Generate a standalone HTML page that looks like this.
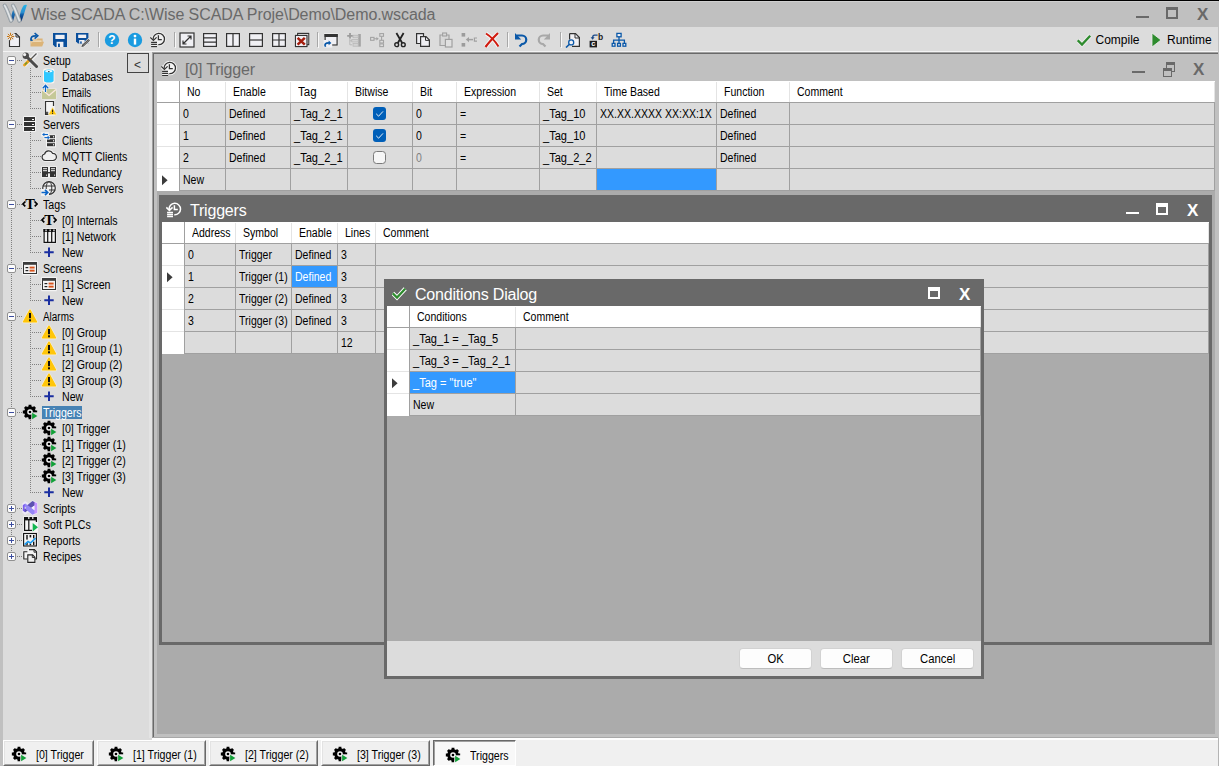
<!DOCTYPE html><html><head><meta charset="utf-8"><title>Wise SCADA</title><style>
html,body{margin:0;padding:0;}
body{width:1219px;height:766px;position:relative;overflow:hidden;background:#c0c0c0;font-family:"Liberation Sans",sans-serif;}
div,span,svg{position:absolute;box-sizing:border-box;}
span{white-space:nowrap;}
.t{font-size:12px;line-height:16px;color:#000;transform:scaleX(0.886);transform-origin:0 50%;margin-top:1.4px;}
.g{font-size:12px;line-height:21px;color:#000;transform:scaleX(0.877);transform-origin:0 50%;margin-top:1px;}
.w{color:#fff;}
.ttl{font-size:16px;line-height:27px;letter-spacing:-0.2px;margin-top:2px;}
.tb{font-size:12px;line-height:16px;color:#000;}
.x{font-size:17px;font-weight:bold;line-height:20px;margin-top:1px;}
</style></head><body>
<div style="left:0px;top:0px;width:1219px;height:1px;background:#000;"></div>
<div style="left:0px;top:1px;width:1219px;height:26px;background:#c0c0c0;"></div>
<svg style="left:0px;top:0px;" width="30" height="24" viewBox="0 0 30 24" ><linearGradient id="lgB" x1="0" y1="0" x2="0" y2="1"><stop offset="0" stop-color="#24b6ea"/><stop offset="0.45" stop-color="#2a8fd0"/><stop offset="0.6" stop-color="#0e58a4"/><stop offset="1" stop-color="#07245f"/></linearGradient><linearGradient id="lgB2" x1="0" y1="0" x2="0" y2="1"><stop offset="0" stop-color="#2a8fd0"/><stop offset="1" stop-color="#0b3d86"/></linearGradient><path d="M10.7 21.4 C10.8 17 12.2 12 13.4 8.9 L15.2 14 C14.4 16.5 13.6 19 13 21.2 Z" fill="url(#lgB2)"/><path d="M4.7 5.6 C6.8 8.5 8.6 14.5 11.1 20.6" fill="none" stroke="#8d969d" stroke-width="4.1" stroke-linecap="round"/><path d="M4.7 5.6 C6.8 8.5 8.6 14.5 11.1 20.6" fill="none" stroke="#b4bbc0" stroke-width="2.9" stroke-linecap="round"/><path d="M4.7 5.6 C6.8 8.5 8.6 14.5 11.1 20.6" fill="none" stroke="#e4e7e9" stroke-width="1.4" stroke-linecap="round"/><path d="M19.2 21.4 C19.3 16 21 9 23.6 5.6 C24.6 4.6 26 4.5 26.9 5 C25.2 10 23.2 17 21.6 21 C20.8 21.9 19.9 21.9 19.2 21.4 Z" fill="url(#lgB)"/><path d="M13.0 5.6 C15.100000000000001 8.5 16.9 14.5 19.4 20.6" fill="none" stroke="#8d969d" stroke-width="4.1" stroke-linecap="round"/><path d="M13.0 5.6 C15.100000000000001 8.5 16.9 14.5 19.4 20.6" fill="none" stroke="#b4bbc0" stroke-width="2.9" stroke-linecap="round"/><path d="M13.0 5.6 C15.100000000000001 8.5 16.9 14.5 19.4 20.6" fill="none" stroke="#e4e7e9" stroke-width="1.4" stroke-linecap="round"/></svg>
<div style="left:0px;top:1px;width:1219px;height:1px;background:#d0d0d0;"></div>
<span class="ttl" style="left:31px;top:1px;color:#696969;line-height:27px;margin-top:0;letter-spacing:-0.08px;">Wise SCADA C:\Wise SCADA Proje\Demo\Demo.wscada</span>
<div style="left:1136px;top:16px;width:13px;height:2px;background:#696969;"></div>
<div style="left:1166px;top:7px;width:12px;height:12px;border:2px solid #696969;border-top:3px solid #696969;"></div>
<span class="x" style="left:1197px;top:4px;color:#696969;">X</span>
<div style="left:3px;top:27px;width:1215px;height:24px;background:#dcdcdc;"></div>
<div style="left:3px;top:51px;width:1215px;height:1px;background:#f4f4f4;"></div>
<svg style="left:7px;top:32px;" width="16" height="16" viewBox="0 0 16 16" ><path d="M2.5 8 V14.5 H12.5 V5 L9 1.5 H7.5" fill="#f0f0f4" stroke="#333" stroke-width="1.1"/><path d="M9 1.5 V5 H12.5" fill="none" stroke="#333" stroke-width="1"/><circle cx="3.5" cy="4.5" r="3.9" fill="#dcdcdc"/><g stroke="#c87818" stroke-width="1"><path d="M3.5 0.8 V8.2 M-0.2 4.5 H7.2 M0.9 1.9 L6.1 7.1 M6.1 1.9 L0.9 7.1"/></g><circle cx="3.5" cy="4.5" r="1.1" fill="#f4f0e8"/></svg>
<svg style="left:29px;top:32px;" width="16" height="16" viewBox="0 0 16 16" ><path d="M1.5 7.5 V14.5 H13.2 L15 9.8 H13.6 V6.5 H8.5 L7.5 7.5 Z" fill="#dcb478"/><path d="M2.6 8.6 H12.6 V9.8 H3.4 L2.6 12 Z" fill="#f2e2c6"/><path d="M2.2 8.6 C1.2 5 3 3.6 7.5 3.8" fill="none" stroke="#0a58a8" stroke-width="1.7"/><path d="M5.6 1 L8.8 3.8 L5.6 6.6" fill="none" stroke="#0a58a8" stroke-width="1.6"/><path d="M1.4 7.6 L3.6 8.6" stroke="#0a58a8" stroke-width="1.4"/></svg>
<svg style="left:52px;top:32px;" width="16" height="16" viewBox="0 0 16 16" ><path d="M1 1 H15 V15 H3.2 L1 12.8 Z" fill="#0a4f9c"/><rect x="3.4" y="2.8" width="9.2" height="4.2" fill="#f0f0f4"/><rect x="4.6" y="9.8" width="6.8" height="5.2" fill="#f0f0f4"/><rect x="6" y="11.6" width="1.9" height="3.4" fill="#0a4f9c"/></svg>
<svg style="left:75px;top:32px;" width="16" height="16" viewBox="0 0 16 16" ><path d="M1 1 H13.4 V11.6 H3 L1 9.6 Z" fill="#0a4f9c"/><rect x="3.2" y="2.6" width="8" height="3.4" fill="#f0f0f4"/><rect x="4.2" y="8" width="5.4" height="3.6" fill="#f0f0f4"/><rect x="5.2" y="9.4" width="1.5" height="2.2" fill="#0a4f9c"/><path d="M5.8 15.6 L6.6 12.4 L13.4 6 L16 8.6 L9 15 Z" fill="#ececec"/><path d="M6.4 15 L7.2 12.8 L13.4 7 L15 8.6 L8.6 14.4 Z" fill="#484848"/><path d="M8.2 13.4 L13.8 8.2" stroke="#b8b8b8" stroke-width="0.6"/></svg>
<div style="left:98px;top:32px;width:1px;height:15px;background:#a8a8a8;"></div>
<div style="left:99px;top:33px;width:1px;height:15px;background:#f8f8f8;"></div>
<svg style="left:104px;top:32px;" width="16" height="16" viewBox="0 0 16 16" ><circle cx="8" cy="8" r="7.2" fill="#1a9be0"/><text x="8" y="12.3" font-family="Liberation Sans,sans-serif" font-weight="bold" font-size="12" text-anchor="middle" fill="#fff">?</text></svg>
<svg style="left:127px;top:32px;" width="16" height="16" viewBox="0 0 16 16" ><circle cx="8" cy="8" r="7.2" fill="#1a9be0"/><rect x="6.8" y="6.6" width="2.4" height="6" fill="#fff"/><circle cx="8" cy="4.1" r="1.4" fill="#fff"/></svg>
<svg style="left:150px;top:32px;" width="16" height="16" viewBox="0 0 16 16" ><g fill="none" stroke="#f0f0f0" stroke-width="3"><path d="M3.15 7.7 A5.7 5.7 0 1 1 8.3 12.7"/><path d="M8.4 3.2 V7.5 H11.8"/><path d="M0.3 5.4 L3.4 8.4 L6.6 5.4"/><path d="M1.1 10.4 H7 M1.1 12.4 H7 M1.1 14.5 H7"/></g><circle cx="8.8" cy="6.8" r="5.5" fill="#f0f0f0"/><g fill="none" stroke="#333" stroke-width="1.25"><path d="M3.15 7.7 A5.7 5.7 0 1 1 8.3 12.7"/><path d="M8.4 3.2 V7.5 H11.8"/><path d="M0.3 5.4 L3.4 8.4 L6.6 5.4"/><path d="M1.1 10.4 H7 M1.1 12.4 H7 M1.1 14.5 H7"/></g></svg>
<div style="left:174px;top:32px;width:1px;height:15px;background:#a8a8a8;"></div>
<div style="left:175px;top:33px;width:1px;height:15px;background:#f8f8f8;"></div>
<svg style="left:179px;top:32px;" width="16" height="16" viewBox="0 0 16 16" ><rect x="1" y="1" width="14" height="14" fill="#f0f0f4" stroke="#333" stroke-width="1.2"/><path d="M4 12 L12 4 M4 8.5 V12 H7.5 M8.5 4 H12 V7.5" fill="none" stroke="#333" stroke-width="1.2"/></svg>
<svg style="left:202px;top:32px;" width="16" height="16" viewBox="0 0 16 16" ><rect x="1.6" y="1.6" width="12.8" height="12.8" fill="#f0f0f4" stroke="#333" stroke-width="1.2"/><path d="M1 5.8 H15 M1 10.2 H15" stroke="#333" stroke-width="1.2"/></svg>
<svg style="left:225px;top:32px;" width="16" height="16" viewBox="0 0 16 16" ><rect x="1.6" y="1.6" width="12.8" height="12.8" fill="#f0f0f4" stroke="#333" stroke-width="1.2"/><path d="M8 1 V15" stroke="#333" stroke-width="1.2"/></svg>
<svg style="left:248px;top:32px;" width="16" height="16" viewBox="0 0 16 16" ><rect x="1.6" y="1.6" width="12.8" height="12.8" fill="#f0f0f4" stroke="#333" stroke-width="1.2"/><path d="M1 8 H15" stroke="#333" stroke-width="1.2"/></svg>
<svg style="left:271px;top:32px;" width="16" height="16" viewBox="0 0 16 16" ><rect x="1.6" y="1.6" width="12.8" height="12.8" fill="#f0f0f4" stroke="#333" stroke-width="1.2"/><path d="M1 8 H15 M8 1 V15" stroke="#333" stroke-width="1.2"/></svg>
<svg style="left:294px;top:32px;" width="16" height="16" viewBox="0 0 16 16" ><path d="M2.6 0.2 H15.8 V13.6 H14 V15.6 H0.2 V2.4 H2.6 Z" fill="#f4f4f4"/><path d="M3.6 3 V1.4 H14.8 V12.6 H13.2" fill="none" stroke="#333" stroke-width="1.1"/><rect x="1.4" y="3.4" width="11.6" height="11.2" fill="#f0f0f4" stroke="#333" stroke-width="1.2"/><path d="M3.6 5.8 L10.8 12.6 M10.8 5.8 L3.6 12.6" stroke="#a41c0c" stroke-width="2.5"/></svg>
<div style="left:317px;top:32px;width:1px;height:15px;background:#a8a8a8;"></div>
<div style="left:318px;top:33px;width:1px;height:15px;background:#f8f8f8;"></div>
<svg style="left:323px;top:32px;" width="16" height="16" viewBox="0 0 16 16" ><rect x="1" y="1.4" width="14.2" height="12.6" fill="#f4f4f4"/><rect x="2.1" y="2.6" width="12" height="10.4" fill="#f0f0f4" stroke="#333" stroke-width="1.2"/><rect x="1.5" y="2" width="13.2" height="3" fill="#333"/><path d="M0.6 8 h8.6 v7.6 h-8.6 z" fill="#f0f0f4"/><path d="M2.6 14.8 C1 12.4 2.4 10.6 6.6 10.8" fill="none" stroke="#0a58a8" stroke-width="1.7"/><path d="M5.6 8.6 L8.4 10.9 L5.6 13.2 Z" fill="#0a58a8"/></svg>
<svg style="left:346px;top:32px;" width="16" height="16" viewBox="0 0 16 16" ><path d="M4 1 V6.6 M1.2 3.8 H6.8" stroke="#9c9c9c" stroke-width="1.8"/><path d="M3.8 6.4 V12.8 H6 M3.8 8.8 H6" fill="none" stroke="#b8b8b8" stroke-width="1"/><rect x="12.2" y="2" width="2.6" height="12.6" fill="#a4a4a4"/><g fill="#d2d2d2" stroke="#b4b4b4" stroke-width="0.7"><rect x="7" y="3.2" width="5.2" height="2.6"/><rect x="5.8" y="7.4" width="6.4" height="2.6"/><rect x="7" y="11.6" width="5.2" height="2.6"/></g></svg>
<svg style="left:369px;top:32px;" width="16" height="16" viewBox="0 0 16 16" ><g stroke="#a4a4a4" fill="#dedede" stroke-width="1.1"><rect x="1.6" y="5.4" width="3.4" height="2.9"/><rect x="10.8" y="1.6" width="3.7" height="2.7"/><rect x="10.8" y="8.3" width="3.7" height="2.7"/><rect x="10.8" y="11.9" width="3.7" height="2.7"/><path d="M5 6.8 H8.2 M12.6 4.3 V8.3" fill="none"/></g><path d="M7.4 5 L9.8 6.8 L7.4 8.6 Z" fill="#a4a4a4"/></svg>
<svg style="left:392px;top:32px;" width="16" height="16" viewBox="0 0 16 16" ><g fill="none" stroke="#222"><path d="M4.4 1 L10.2 11 M11.6 1 L5.8 11" stroke-width="1.8"/><circle cx="4.7" cy="12.7" r="1.9" stroke-width="1.4"/><circle cx="11.3" cy="12.7" r="1.9" stroke-width="1.4"/></g></svg>
<svg style="left:415px;top:32px;" width="16" height="16" viewBox="0 0 16 16" ><path d="M1.6 1.6 H8.5 V11.5 H1.6 Z" fill="#f0f0f4" stroke="#333" stroke-width="1.2"/><path d="M5.6 4.6 H11 L14.4 8 V14.4 H5.6 Z" fill="#f0f0f4" stroke="#333" stroke-width="1.2"/><path d="M10.5 4.6 V8.4 H14.4" fill="none" stroke="#333" stroke-width="1"/></svg>
<svg style="left:438px;top:32px;" width="16" height="16" viewBox="0 0 16 16" ><path d="M2 3 H11 V13.5 H2 Z" fill="#d8d8d8" stroke="#a0a0a0" stroke-width="1.2"/><rect x="4.6" y="1" width="4" height="3" fill="#d8d8d8" stroke="#a0a0a0" stroke-width="1.1"/><rect x="7.4" y="7.4" width="6.6" height="7.6" fill="#e0e0e0" stroke="#a0a0a0" stroke-width="1.2"/></svg>
<svg style="left:461px;top:32px;" width="16" height="16" viewBox="0 0 16 16" ><rect x="0.6" y="1" width="3.6" height="3.6" fill="#9c9c9c"/><rect x="0.6" y="11" width="3.6" height="3.6" fill="#9c9c9c"/><path d="M7 7.6 H12" stroke="#a0a0a0" stroke-width="1.5"/><path d="M8 5 L4.8 7.6 L8 10.2 Z" fill="#a0a0a0"/><path d="M16 6 H13.4 V9.2 H16" fill="none" stroke="#a0a0a0" stroke-width="1.2"/></svg>
<svg style="left:484px;top:32px;" width="16" height="16" viewBox="0 0 16 16" ><path d="M2 1.5 C6 4 11 9 14.5 14.5 M14 1 C10 5 5 10 1.5 15" fill="none" stroke="#fff" stroke-width="4" opacity="0.7"/><path d="M2 1.5 C6 4 11 9 14.5 14.5" fill="none" stroke="#d01c10" stroke-width="2"/><path d="M14 1 C10 5 5 10 1.5 15" fill="none" stroke="#d01c10" stroke-width="2.2"/></svg>
<div style="left:507px;top:32px;width:1px;height:15px;background:#a8a8a8;"></div>
<div style="left:508px;top:33px;width:1px;height:15px;background:#f8f8f8;"></div>
<svg style="left:513px;top:32px;" width="16" height="16" viewBox="0 0 16 16" ><path d="M3.5 3.5 H9 A4.2 4.2 0 0 1 9 12 L6.5 14.5" fill="none" stroke="#0a58a8" stroke-width="2.2"/><path d="M2 1 V7.5 H8.2 Z" fill="#0a58a8"/></svg>
<svg style="left:536px;top:32px;" width="16" height="16" viewBox="0 0 16 16" ><path d="M12.5 3.5 H7 A4.2 4.2 0 0 0 7 12 L9.5 14.5" fill="none" stroke="#a8a8a8" stroke-width="2.2"/><path d="M14 1 V7.5 H7.8 Z" fill="#a8a8a8"/></svg>
<div style="left:560px;top:32px;width:1px;height:15px;background:#a8a8a8;"></div>
<div style="left:561px;top:33px;width:1px;height:15px;background:#f8f8f8;"></div>
<svg style="left:565px;top:32px;" width="16" height="16" viewBox="0 0 16 16" ><path d="M4.6 1.6 H10.5 L14.4 5.5 V14.4 H7" fill="#f0f0f4" stroke="#333" stroke-width="1.2"/><path d="M10 1.6 V6 H14.4" fill="none" stroke="#333" stroke-width="1"/><path d="M4.6 1.6 V7.4" stroke="#333" stroke-width="1.2"/><circle cx="6.2" cy="10.4" r="2.5" fill="#f0f0f4" stroke="#0a58a8" stroke-width="1.3"/><path d="M4.4 12.2 L1 15.6" stroke="#0a58a8" stroke-width="1.5"/></svg>
<svg style="left:588px;top:32px;" width="16" height="16" viewBox="0 0 16 16" ><rect x="1.6" y="8.8" width="7.4" height="6.6" fill="#1c1c1c"/><text x="5.3" y="14.4" font-family="Liberation Sans,sans-serif" font-weight="bold" font-size="7.5" text-anchor="middle" fill="#fff">c</text><text x="12.6" y="7.6" font-family="Liberation Sans,sans-serif" font-weight="bold" font-size="8.5" text-anchor="middle" fill="#1c1c1c">b</text><path d="M9.6 3.2 H6.6 C5 3.2 4.6 4 4.6 6" fill="none" stroke="#1a4a8a" stroke-width="1.3"/><path d="M2.6 5.2 L4.6 7.8 L6.6 5.2 Z" fill="#1a4a8a"/></svg>
<svg style="left:611px;top:32px;" width="16" height="16" viewBox="0 0 16 16" ><g fill="#f0f0f4" stroke="#0a58a8" stroke-width="1.3"><rect x="5.9" y="1.4" width="4.2" height="3.4"/><rect x="1.2" y="11.4" width="2.8" height="2.8"/><rect x="6.6" y="11.4" width="2.8" height="2.8"/><rect x="12" y="11.4" width="2.8" height="2.8"/><path d="M8 4.8 V11.4 M2.6 11.4 V8.2 H13.4 V11.4" fill="none"/></g></svg>
<span class="tb" style="left:1095.5px;top:32px;">Compile</span>
<span class="tb" style="left:1167px;top:32px;">Runtime</span>
<svg style="left:1077px;top:33px;" width="16" height="16" viewBox="0 0 16 16" ><path d="M0.7 7.3 L5 11.6 L13.2 2.8" fill="none" stroke="#ececec" stroke-width="4.2" stroke-linejoin="miter"/><path d="M0.7 7.3 L5 11.6 L13.2 2.8" fill="none" stroke="#2e8b2e" stroke-width="2.3"/></svg>
<svg style="left:1151px;top:32px;" width="12" height="16" viewBox="0 0 12 16" ><path d="M1 1 L10 8 L1 15 Z" fill="#2e8b2e" stroke="#eee" stroke-width="0.8"/></svg>
<div style="left:0px;top:27px;width:3px;height:739px;background:#c0c0c0;"></div>
<div style="left:3px;top:52px;width:149px;height:688px;background:#dcdcdc;"></div>
<div style="left:149px;top:52px;width:3px;height:686px;background:#e4e4e4;"></div>
<div style="left:11px;top:66px;width:1px;height:486px;background:repeating-linear-gradient(to bottom,#808080 0,#808080 1px,transparent 1px,transparent 2px);"></div>
<div style="left:17px;top:60px;width:5px;height:1px;background:repeating-linear-gradient(to right,#808080 0,#808080 1px,transparent 1px,transparent 2px);"></div>
<svg style="left:7px;top:56px;" width="9" height="9" viewBox="0 0 9 9" ><rect x="0.5" y="0.5" width="8" height="8" rx="1.5" fill="#fcfcfc" stroke="#919191"/><rect x="2" y="4" width="5" height="1" fill="#3c4da0"/></svg>
<svg style="left:22px;top:52px;" width="16" height="16" viewBox="0 0 16 16" ><g stroke="#f0f0f0" stroke-width="4" stroke-linecap="round" fill="none"><path d="M4 4 L14 14"/><path d="M14 2 L3 13"/></g><path d="M14.5 1.5 L8 8" stroke="#555" stroke-width="1.3"/><path d="M8 7.5 L2.5 13" stroke="#e8a020" stroke-width="3" stroke-linecap="round"/><path d="M5 10.5 L3 12.5" stroke="#6a9a30" stroke-width="1.5"/><path d="M5 5 L14.5 14.5" stroke="#4a4a4a" stroke-width="3" stroke-linecap="round"/><circle cx="3.8" cy="3.8" r="3.2" fill="#4a4a4a"/><circle cx="2.6" cy="2.6" r="1.6" fill="#f0f0f0"/></svg>
<div style="left:30px;top:68px;width:1px;height:41px;background:repeating-linear-gradient(to bottom,#808080 0,#808080 1px,transparent 1px,transparent 2px);"></div>
<span class="t" style="left:43px;top:52px;">Setup</span>
<div style="left:32px;top:76px;width:9px;height:1px;background:repeating-linear-gradient(to right,#808080 0,#808080 1px,transparent 1px,transparent 2px);"></div>
<svg style="left:41px;top:68px;" width="16" height="16" viewBox="0 0 16 16" ><rect x="2" y="0.5" width="11.5" height="15" rx="2.5" fill="#fdf4ee"/><path d="M3 3.5 V12.5 A4.8 2 0 0 0 12.6 12.5 V3.5 Z" fill="#30c8ff"/><ellipse cx="7.8" cy="3.5" rx="4.8" ry="2" fill="#30c8ff"/><ellipse cx="7.8" cy="3.2" rx="3.6" ry="1.1" fill="#e8faff"/><rect x="7" y="3.2" width="1.6" height="0.9" fill="#333"/></svg>
<span class="t" style="left:62px;top:68px;">Databases</span>
<div style="left:32px;top:92px;width:9px;height:1px;background:repeating-linear-gradient(to right,#808080 0,#808080 1px,transparent 1px,transparent 2px);"></div>
<svg style="left:41px;top:84px;" width="16" height="16" viewBox="0 0 16 16" ><rect x="0.5" y="4.5" width="15" height="11" fill="#f0ece4"/><rect x="1" y="5" width="14" height="10" fill="#c5c898"/><path d="M1 5.5 L8 11.5 L15 5.5" fill="none" stroke="#fbe9e0" stroke-width="1.3"/><path d="M4.5 8 V1.5 M1.8 4.2 L4.5 1.3 L7.2 4.2" fill="none" stroke="#fff" stroke-width="2.6"/><path d="M4.5 8 V1.5 M1.8 4.2 L4.5 1.3 L7.2 4.2" fill="none" stroke="#0a64c8" stroke-width="1.3"/></svg>
<span class="t" style="left:62px;top:84px;transform:scaleX(0.81);">Emails</span>
<div style="left:32px;top:108px;width:9px;height:1px;background:repeating-linear-gradient(to right,#808080 0,#808080 1px,transparent 1px,transparent 2px);"></div>
<svg style="left:41px;top:100px;" width="16" height="16" viewBox="0 0 16 16" ><rect x="3.2" y="0.2" width="10.6" height="15.6" fill="#f0f0f0"/><path d="M12.5 6 V1.5 H4.5 V14.5 H8" fill="#f4f4f4" stroke="#333" stroke-width="1.2"/><rect x="5.2" y="12.2" width="1.6" height="1.6" fill="none" stroke="#333" stroke-width="0.8"/><path d="M11.5 7.2 L15.7 14.8 H7.3 Z" fill="#ffc60a" stroke="#f8f0d0" stroke-width="0.6"/><rect x="11" y="9.6" width="1.1" height="2.6" fill="#222"/><rect x="11" y="12.8" width="1.1" height="1.1" fill="#222"/></svg>
<span class="t" style="left:62px;top:100px;">Notifications</span>
<div style="left:17px;top:124px;width:5px;height:1px;background:repeating-linear-gradient(to right,#808080 0,#808080 1px,transparent 1px,transparent 2px);"></div>
<svg style="left:7px;top:120px;" width="9" height="9" viewBox="0 0 9 9" ><rect x="0.5" y="0.5" width="8" height="8" rx="1.5" fill="#fcfcfc" stroke="#919191"/><rect x="2" y="4" width="5" height="1" fill="#3c4da0"/></svg>
<svg style="left:22px;top:116px;" width="16" height="16" viewBox="0 0 16 16" ><rect x="1" y="0" width="13" height="16" rx="1.5" fill="#f4f4f4"/><rect x="2" y="1" width="11" height="4" fill="#333"/><rect x="10" y="3" width="2" height="1" fill="#fff"/><rect x="2" y="6" width="11" height="4" fill="#333"/><rect x="10" y="8" width="2" height="1" fill="#fff"/><rect x="2" y="11" width="11" height="4" fill="#333"/><rect x="10" y="13" width="2" height="1" fill="#fff"/></svg>
<div style="left:30px;top:132px;width:1px;height:57px;background:repeating-linear-gradient(to bottom,#808080 0,#808080 1px,transparent 1px,transparent 2px);"></div>
<span class="t" style="left:43px;top:116px;">Servers</span>
<div style="left:32px;top:140px;width:9px;height:1px;background:repeating-linear-gradient(to right,#808080 0,#808080 1px,transparent 1px,transparent 2px);"></div>
<svg style="left:41px;top:132px;" width="16" height="16" viewBox="0 0 16 16" ><rect x="5" y="2.5" width="10" height="13" rx="1" fill="#f4f4f4"/><rect x="6" y="3.2" width="8" height="3" fill="#333"/><rect x="12" y="4.2" width="1.2" height="1.2" fill="#fff"/><rect x="6" y="7.2" width="8" height="3" fill="#333"/><rect x="12" y="8.2" width="1.2" height="1.2" fill="#fff"/><rect x="6" y="11.2" width="8" height="3" fill="#333"/><rect x="12" y="12.2" width="1.2" height="1.2" fill="#fff"/><path d="M0.2 0.2 h7.6 v4.4 h-7.6 z M2.6 3.4 h6.4 v4 h-6.4 z" fill="#f4f4f4"/><path d="M7 2.5 H2.5" stroke="#0a64c8" stroke-width="1.1"/><path d="M3.4 0.7 L1 2.5 L3.4 4.3 Z" fill="#0a64c8"/><path d="M3.4 5.6 H7.5" stroke="#0a64c8" stroke-width="1.1"/><path d="M6.6 3.8 L9 5.6 L6.6 7.4 Z" fill="#0a64c8"/></svg>
<span class="t" style="left:62px;top:132px;transform:scaleX(0.829);">Clients</span>
<div style="left:32px;top:156px;width:9px;height:1px;background:repeating-linear-gradient(to right,#808080 0,#808080 1px,transparent 1px,transparent 2px);"></div>
<svg style="left:41px;top:148px;" width="16" height="16" viewBox="0 0 16 16" ><path d="M4.3 12.5 A3.3 3.3 0 0 1 3.6 6 A4.3 4.3 0 0 1 11.6 5.3 A3.6 3.6 0 0 1 12 12.5 Z" fill="#f0f0f0" stroke="#f0f0f0" stroke-width="3"/><path d="M4.3 12.5 A3.3 3.3 0 0 1 3.6 6 A4.3 4.3 0 0 1 11.6 5.3 A3.6 3.6 0 0 1 12 12.5 Z" fill="#f0f0f0" stroke="#333" stroke-width="1.2"/></svg>
<span class="t" style="left:62px;top:148px;">MQTT Clients</span>
<div style="left:32px;top:172px;width:9px;height:1px;background:repeating-linear-gradient(to right,#808080 0,#808080 1px,transparent 1px,transparent 2px);"></div>
<svg style="left:41px;top:164px;" width="16" height="16" viewBox="0 0 16 16" ><rect x="0.2" y="2.2" width="15.6" height="11.6" fill="#f0f0f0"/><rect x="1" y="3" width="6" height="10" fill="#333"/><rect x="2" y="4.2" width="4" height="1" fill="#f0f0f0"/><rect x="2" y="6.2" width="4" height="1" fill="#f0f0f0"/><rect x="5" y="10.6" width="1.1" height="1.1" fill="#f0f0f0"/><rect x="9" y="3" width="6" height="10" fill="#333"/><rect x="10" y="4.2" width="4" height="1" fill="#f0f0f0"/><rect x="10" y="6.2" width="4" height="1" fill="#f0f0f0"/><rect x="13" y="10.6" width="1.1" height="1.1" fill="#f0f0f0"/><rect x="7" y="8" width="2" height="1.4" fill="#333"/></svg>
<span class="t" style="left:62px;top:164px;">Redundancy</span>
<div style="left:32px;top:188px;width:9px;height:1px;background:repeating-linear-gradient(to right,#808080 0,#808080 1px,transparent 1px,transparent 2px);"></div>
<svg style="left:41px;top:180px;" width="16" height="16" viewBox="0 0 16 16" ><circle cx="8" cy="8" r="7.6" fill="#f0f0f0"/><circle cx="8" cy="8" r="6.3" fill="#f0f0f0" stroke="#333" stroke-width="1.2"/><ellipse cx="8" cy="8" rx="2.8" ry="6.3" fill="none" stroke="#333" stroke-width="1"/><path d="M1.7 6 H14.3 M1.7 10 H14.3" stroke="#333" stroke-width="1"/><path d="M0 9 h8 v7 h-8 z" fill="#f0f0f0"/><path d="M0.5 12.5 H6.5 M4 9.8 L6.8 12.5 L4 15.2" fill="none" stroke="#0a64c8" stroke-width="1.6"/></svg>
<span class="t" style="left:62px;top:180px;">Web Servers</span>
<div style="left:17px;top:204px;width:5px;height:1px;background:repeating-linear-gradient(to right,#808080 0,#808080 1px,transparent 1px,transparent 2px);"></div>
<svg style="left:7px;top:200px;" width="9" height="9" viewBox="0 0 9 9" ><rect x="0.5" y="0.5" width="8" height="8" rx="1.5" fill="#fcfcfc" stroke="#919191"/><rect x="2" y="4" width="5" height="1" fill="#3c4da0"/></svg>
<svg style="left:22px;top:196px;" width="16" height="16" viewBox="0 0 16 16" ><text x="8" y="12.8" font-family="Liberation Serif,serif" font-weight="bold" font-size="14.5" text-anchor="middle" fill="#000">T</text><path d="M3.3 5.6 L0.9 8 L3.3 10.4 M12.7 5.6 L15.1 8 L12.7 10.4" fill="none" stroke="#000" stroke-width="1.6"/></svg>
<div style="left:30px;top:212px;width:1px;height:41px;background:repeating-linear-gradient(to bottom,#808080 0,#808080 1px,transparent 1px,transparent 2px);"></div>
<span class="t" style="left:43px;top:196px;">Tags</span>
<div style="left:32px;top:220px;width:9px;height:1px;background:repeating-linear-gradient(to right,#808080 0,#808080 1px,transparent 1px,transparent 2px);"></div>
<svg style="left:41px;top:212px;" width="16" height="16" viewBox="0 0 16 16" ><text x="8" y="12.8" font-family="Liberation Serif,serif" font-weight="bold" font-size="14.5" text-anchor="middle" fill="#000">T</text><path d="M3.3 5.6 L0.9 8 L3.3 10.4 M12.7 5.6 L15.1 8 L12.7 10.4" fill="none" stroke="#000" stroke-width="1.6"/></svg>
<span class="t" style="left:62px;top:212px;">[0] Internals</span>
<div style="left:32px;top:236px;width:9px;height:1px;background:repeating-linear-gradient(to right,#808080 0,#808080 1px,transparent 1px,transparent 2px);"></div>
<svg style="left:41px;top:228px;" width="16" height="16" viewBox="0 0 16 16" ><rect x="1.6" y="0.4" width="13.8" height="15" fill="#f0f0f0"/><rect x="3.1" y="1.6" width="11.3" height="12.8" fill="#f4f4f4" stroke="#111" stroke-width="1.2"/><rect x="2.5" y="1" width="12.5" height="3" fill="#111"/><path d="M6.7 2 V14 M10.7 2 V14" stroke="#111" stroke-width="1.2"/><rect x="4.4" y="1.5" width="1.3" height="1.8" fill="#f4f4f4"/><rect x="8.5" y="1.5" width="1.3" height="1.8" fill="#f4f4f4"/><rect x="12.3" y="1.5" width="1.3" height="1.8" fill="#f4f4f4"/></svg>
<span class="t" style="left:62px;top:228px;">[1] Network</span>
<div style="left:32px;top:252px;width:9px;height:1px;background:repeating-linear-gradient(to right,#808080 0,#808080 1px,transparent 1px,transparent 2px);"></div>
<svg style="left:41px;top:244px;" width="16" height="16" viewBox="0 0 16 16" ><path d="M8 3.6 V13 M3.3 8.3 H12.7" stroke="#1a2ea0" stroke-width="2"/></svg>
<span class="t" style="left:62px;top:244px;">New</span>
<div style="left:17px;top:268px;width:5px;height:1px;background:repeating-linear-gradient(to right,#808080 0,#808080 1px,transparent 1px,transparent 2px);"></div>
<svg style="left:7px;top:264px;" width="9" height="9" viewBox="0 0 9 9" ><rect x="0.5" y="0.5" width="8" height="8" rx="1.5" fill="#fcfcfc" stroke="#919191"/><rect x="2" y="4" width="5" height="1" fill="#3c4da0"/></svg>
<svg style="left:22px;top:260px;" width="16" height="16" viewBox="0 0 16 16" ><rect x="0.3" y="0.8" width="15.4" height="14.4" fill="#f4f4f4"/><rect x="1.5" y="2.5" width="13" height="11" fill="#f4f4f4" stroke="#333" stroke-width="1"/><rect x="1" y="2" width="14" height="2.8" fill="#3c3c3c"/><rect x="3.5" y="7" width="2.8" height="1.2" fill="#222"/><rect x="3.5" y="10" width="2.8" height="1.2" fill="#222"/><rect x="7.6" y="6.6" width="5" height="1.9" fill="#d8531c"/><rect x="7.6" y="9.7" width="5" height="1.9" fill="#d8531c"/></svg>
<div style="left:30px;top:276px;width:1px;height:25px;background:repeating-linear-gradient(to bottom,#808080 0,#808080 1px,transparent 1px,transparent 2px);"></div>
<span class="t" style="left:43px;top:260px;">Screens</span>
<div style="left:32px;top:284px;width:9px;height:1px;background:repeating-linear-gradient(to right,#808080 0,#808080 1px,transparent 1px,transparent 2px);"></div>
<svg style="left:41px;top:276px;" width="16" height="16" viewBox="0 0 16 16" ><rect x="0.3" y="0.8" width="15.4" height="14.4" fill="#f4f4f4"/><rect x="1.5" y="2.5" width="13" height="11" fill="#f4f4f4" stroke="#333" stroke-width="1"/><rect x="1" y="2" width="14" height="2.8" fill="#3c3c3c"/><rect x="3.5" y="7" width="2.8" height="1.2" fill="#222"/><rect x="3.5" y="10" width="2.8" height="1.2" fill="#222"/><rect x="7.6" y="6.6" width="5" height="1.9" fill="#d8531c"/><rect x="7.6" y="9.7" width="5" height="1.9" fill="#d8531c"/></svg>
<span class="t" style="left:62px;top:276px;">[1] Screen</span>
<div style="left:32px;top:300px;width:9px;height:1px;background:repeating-linear-gradient(to right,#808080 0,#808080 1px,transparent 1px,transparent 2px);"></div>
<svg style="left:41px;top:292px;" width="16" height="16" viewBox="0 0 16 16" ><path d="M8 3.6 V13 M3.3 8.3 H12.7" stroke="#1a2ea0" stroke-width="2"/></svg>
<span class="t" style="left:62px;top:292px;">New</span>
<div style="left:17px;top:316px;width:5px;height:1px;background:repeating-linear-gradient(to right,#808080 0,#808080 1px,transparent 1px,transparent 2px);"></div>
<svg style="left:7px;top:312px;" width="9" height="9" viewBox="0 0 9 9" ><rect x="0.5" y="0.5" width="8" height="8" rx="1.5" fill="#fcfcfc" stroke="#919191"/><rect x="2" y="4" width="5" height="1" fill="#3c4da0"/></svg>
<svg style="left:22px;top:308px;" width="16" height="16" viewBox="0 0 16 16" ><path d="M8 2.2 L14.4 13.8 H1.6 Z" fill="#f6edd5" stroke="#f6edd5" stroke-width="2.8" stroke-linejoin="round"/><path d="M8 2.2 L14.4 13.8 H1.6 Z" fill="#ffc60a" stroke="#ffc60a" stroke-width="1.5" stroke-linejoin="round"/><rect x="7" y="5" width="2" height="5.2" fill="#111"/><rect x="7" y="11.3" width="2" height="2" fill="#111"/></svg>
<div style="left:30px;top:324px;width:1px;height:73px;background:repeating-linear-gradient(to bottom,#808080 0,#808080 1px,transparent 1px,transparent 2px);"></div>
<span class="t" style="left:43px;top:308px;transform:scaleX(0.826);">Alarms</span>
<div style="left:32px;top:332px;width:9px;height:1px;background:repeating-linear-gradient(to right,#808080 0,#808080 1px,transparent 1px,transparent 2px);"></div>
<svg style="left:41px;top:324px;" width="16" height="16" viewBox="0 0 16 16" ><path d="M8 2.2 L14.4 13.8 H1.6 Z" fill="#f6edd5" stroke="#f6edd5" stroke-width="2.8" stroke-linejoin="round"/><path d="M8 2.2 L14.4 13.8 H1.6 Z" fill="#ffc60a" stroke="#ffc60a" stroke-width="1.5" stroke-linejoin="round"/><rect x="7" y="5" width="2" height="5.2" fill="#111"/><rect x="7" y="11.3" width="2" height="2" fill="#111"/></svg>
<span class="t" style="left:62px;top:324px;">[0] Group</span>
<div style="left:32px;top:348px;width:9px;height:1px;background:repeating-linear-gradient(to right,#808080 0,#808080 1px,transparent 1px,transparent 2px);"></div>
<svg style="left:41px;top:340px;" width="16" height="16" viewBox="0 0 16 16" ><path d="M8 2.2 L14.4 13.8 H1.6 Z" fill="#f6edd5" stroke="#f6edd5" stroke-width="2.8" stroke-linejoin="round"/><path d="M8 2.2 L14.4 13.8 H1.6 Z" fill="#ffc60a" stroke="#ffc60a" stroke-width="1.5" stroke-linejoin="round"/><rect x="7" y="5" width="2" height="5.2" fill="#111"/><rect x="7" y="11.3" width="2" height="2" fill="#111"/></svg>
<span class="t" style="left:62px;top:340px;">[1] Group (1)</span>
<div style="left:32px;top:364px;width:9px;height:1px;background:repeating-linear-gradient(to right,#808080 0,#808080 1px,transparent 1px,transparent 2px);"></div>
<svg style="left:41px;top:356px;" width="16" height="16" viewBox="0 0 16 16" ><path d="M8 2.2 L14.4 13.8 H1.6 Z" fill="#f6edd5" stroke="#f6edd5" stroke-width="2.8" stroke-linejoin="round"/><path d="M8 2.2 L14.4 13.8 H1.6 Z" fill="#ffc60a" stroke="#ffc60a" stroke-width="1.5" stroke-linejoin="round"/><rect x="7" y="5" width="2" height="5.2" fill="#111"/><rect x="7" y="11.3" width="2" height="2" fill="#111"/></svg>
<span class="t" style="left:62px;top:356px;">[2] Group (2)</span>
<div style="left:32px;top:380px;width:9px;height:1px;background:repeating-linear-gradient(to right,#808080 0,#808080 1px,transparent 1px,transparent 2px);"></div>
<svg style="left:41px;top:372px;" width="16" height="16" viewBox="0 0 16 16" ><path d="M8 2.2 L14.4 13.8 H1.6 Z" fill="#f6edd5" stroke="#f6edd5" stroke-width="2.8" stroke-linejoin="round"/><path d="M8 2.2 L14.4 13.8 H1.6 Z" fill="#ffc60a" stroke="#ffc60a" stroke-width="1.5" stroke-linejoin="round"/><rect x="7" y="5" width="2" height="5.2" fill="#111"/><rect x="7" y="11.3" width="2" height="2" fill="#111"/></svg>
<span class="t" style="left:62px;top:372px;">[3] Group (3)</span>
<div style="left:32px;top:396px;width:9px;height:1px;background:repeating-linear-gradient(to right,#808080 0,#808080 1px,transparent 1px,transparent 2px);"></div>
<svg style="left:41px;top:388px;" width="16" height="16" viewBox="0 0 16 16" ><path d="M8 3.6 V13 M3.3 8.3 H12.7" stroke="#1a2ea0" stroke-width="2"/></svg>
<span class="t" style="left:62px;top:388px;">New</span>
<div style="left:17px;top:412px;width:5px;height:1px;background:repeating-linear-gradient(to right,#808080 0,#808080 1px,transparent 1px,transparent 2px);"></div>
<svg style="left:7px;top:408px;" width="9" height="9" viewBox="0 0 9 9" ><rect x="0.5" y="0.5" width="8" height="8" rx="1.5" fill="#fcfcfc" stroke="#919191"/><rect x="2" y="4" width="5" height="1" fill="#3c4da0"/></svg>
<svg style="left:22px;top:404px;" width="16" height="16" viewBox="0 0 16 16" ><path d="M6.58 0.84 L9.42 0.84 L9.40 2.37 L10.99 3.03 L12.06 1.93 L14.07 3.94 L12.97 5.01 L13.63 6.60 L15.16 6.58 L15.16 9.42 L13.63 9.40 L12.97 10.99 L14.07 12.06 L12.06 14.07 L10.99 12.97 L9.40 13.63 L9.42 15.16 L6.58 15.16 L6.60 13.63 L5.01 12.97 L3.94 14.07 L1.93 12.06 L3.03 10.99 L2.37 9.40 L0.84 9.42 L0.84 6.58 L2.37 6.60 L3.03 5.01 L1.93 3.94 L3.94 1.93 L5.01 3.03 L6.60 2.37 Z" fill="#000"/><circle cx="8" cy="8" r="2.8" fill="#f4f4f4"/><circle cx="8" cy="8" r="1.35" fill="#000"/><path d="M9.3 8.3 L16 8.3 L16 16 L9.3 16 Z" fill="#dcdcdc"/><path d="M10.1 8.8 L15.4 12 L10.1 15.2 Z" fill="#12a038"/></svg>
<div style="left:30px;top:420px;width:1px;height:73px;background:repeating-linear-gradient(to bottom,#808080 0,#808080 1px,transparent 1px,transparent 2px);"></div>
<div style="left:42px;top:406px;width:40px;height:13px;background:#4682b4;"></div>
<span class="t w" style="left:43px;top:404px;">Triggers</span>
<div style="left:32px;top:428px;width:9px;height:1px;background:repeating-linear-gradient(to right,#808080 0,#808080 1px,transparent 1px,transparent 2px);"></div>
<svg style="left:41px;top:420px;" width="16" height="16" viewBox="0 0 16 16" ><path d="M6.58 0.84 L9.42 0.84 L9.40 2.37 L10.99 3.03 L12.06 1.93 L14.07 3.94 L12.97 5.01 L13.63 6.60 L15.16 6.58 L15.16 9.42 L13.63 9.40 L12.97 10.99 L14.07 12.06 L12.06 14.07 L10.99 12.97 L9.40 13.63 L9.42 15.16 L6.58 15.16 L6.60 13.63 L5.01 12.97 L3.94 14.07 L1.93 12.06 L3.03 10.99 L2.37 9.40 L0.84 9.42 L0.84 6.58 L2.37 6.60 L3.03 5.01 L1.93 3.94 L3.94 1.93 L5.01 3.03 L6.60 2.37 Z" fill="#000"/><circle cx="8" cy="8" r="2.8" fill="#f4f4f4"/><circle cx="8" cy="8" r="1.35" fill="#000"/><path d="M9.3 8.3 L16 8.3 L16 16 L9.3 16 Z" fill="#dcdcdc"/><path d="M10.1 8.8 L15.4 12 L10.1 15.2 Z" fill="#12a038"/></svg>
<span class="t" style="left:62px;top:420px;">[0] Trigger</span>
<div style="left:32px;top:444px;width:9px;height:1px;background:repeating-linear-gradient(to right,#808080 0,#808080 1px,transparent 1px,transparent 2px);"></div>
<svg style="left:41px;top:436px;" width="16" height="16" viewBox="0 0 16 16" ><path d="M6.58 0.84 L9.42 0.84 L9.40 2.37 L10.99 3.03 L12.06 1.93 L14.07 3.94 L12.97 5.01 L13.63 6.60 L15.16 6.58 L15.16 9.42 L13.63 9.40 L12.97 10.99 L14.07 12.06 L12.06 14.07 L10.99 12.97 L9.40 13.63 L9.42 15.16 L6.58 15.16 L6.60 13.63 L5.01 12.97 L3.94 14.07 L1.93 12.06 L3.03 10.99 L2.37 9.40 L0.84 9.42 L0.84 6.58 L2.37 6.60 L3.03 5.01 L1.93 3.94 L3.94 1.93 L5.01 3.03 L6.60 2.37 Z" fill="#000"/><circle cx="8" cy="8" r="2.8" fill="#f4f4f4"/><circle cx="8" cy="8" r="1.35" fill="#000"/><path d="M9.3 8.3 L16 8.3 L16 16 L9.3 16 Z" fill="#dcdcdc"/><path d="M10.1 8.8 L15.4 12 L10.1 15.2 Z" fill="#12a038"/></svg>
<span class="t" style="left:62px;top:436px;">[1] Trigger (1)</span>
<div style="left:32px;top:460px;width:9px;height:1px;background:repeating-linear-gradient(to right,#808080 0,#808080 1px,transparent 1px,transparent 2px);"></div>
<svg style="left:41px;top:452px;" width="16" height="16" viewBox="0 0 16 16" ><path d="M6.58 0.84 L9.42 0.84 L9.40 2.37 L10.99 3.03 L12.06 1.93 L14.07 3.94 L12.97 5.01 L13.63 6.60 L15.16 6.58 L15.16 9.42 L13.63 9.40 L12.97 10.99 L14.07 12.06 L12.06 14.07 L10.99 12.97 L9.40 13.63 L9.42 15.16 L6.58 15.16 L6.60 13.63 L5.01 12.97 L3.94 14.07 L1.93 12.06 L3.03 10.99 L2.37 9.40 L0.84 9.42 L0.84 6.58 L2.37 6.60 L3.03 5.01 L1.93 3.94 L3.94 1.93 L5.01 3.03 L6.60 2.37 Z" fill="#000"/><circle cx="8" cy="8" r="2.8" fill="#f4f4f4"/><circle cx="8" cy="8" r="1.35" fill="#000"/><path d="M9.3 8.3 L16 8.3 L16 16 L9.3 16 Z" fill="#dcdcdc"/><path d="M10.1 8.8 L15.4 12 L10.1 15.2 Z" fill="#12a038"/></svg>
<span class="t" style="left:62px;top:452px;">[2] Trigger (2)</span>
<div style="left:32px;top:476px;width:9px;height:1px;background:repeating-linear-gradient(to right,#808080 0,#808080 1px,transparent 1px,transparent 2px);"></div>
<svg style="left:41px;top:468px;" width="16" height="16" viewBox="0 0 16 16" ><path d="M6.58 0.84 L9.42 0.84 L9.40 2.37 L10.99 3.03 L12.06 1.93 L14.07 3.94 L12.97 5.01 L13.63 6.60 L15.16 6.58 L15.16 9.42 L13.63 9.40 L12.97 10.99 L14.07 12.06 L12.06 14.07 L10.99 12.97 L9.40 13.63 L9.42 15.16 L6.58 15.16 L6.60 13.63 L5.01 12.97 L3.94 14.07 L1.93 12.06 L3.03 10.99 L2.37 9.40 L0.84 9.42 L0.84 6.58 L2.37 6.60 L3.03 5.01 L1.93 3.94 L3.94 1.93 L5.01 3.03 L6.60 2.37 Z" fill="#000"/><circle cx="8" cy="8" r="2.8" fill="#f4f4f4"/><circle cx="8" cy="8" r="1.35" fill="#000"/><path d="M9.3 8.3 L16 8.3 L16 16 L9.3 16 Z" fill="#dcdcdc"/><path d="M10.1 8.8 L15.4 12 L10.1 15.2 Z" fill="#12a038"/></svg>
<span class="t" style="left:62px;top:468px;">[3] Trigger (3)</span>
<div style="left:32px;top:492px;width:9px;height:1px;background:repeating-linear-gradient(to right,#808080 0,#808080 1px,transparent 1px,transparent 2px);"></div>
<svg style="left:41px;top:484px;" width="16" height="16" viewBox="0 0 16 16" ><path d="M8 3.6 V13 M3.3 8.3 H12.7" stroke="#1a2ea0" stroke-width="2"/></svg>
<span class="t" style="left:62px;top:484px;">New</span>
<div style="left:17px;top:508px;width:5px;height:1px;background:repeating-linear-gradient(to right,#808080 0,#808080 1px,transparent 1px,transparent 2px);"></div>
<svg style="left:7px;top:504px;" width="9" height="9" viewBox="0 0 9 9" ><rect x="0.5" y="0.5" width="8" height="8" rx="1.5" fill="#fcfcfc" stroke="#919191"/><rect x="2" y="4" width="5" height="1" fill="#3c4da0"/><rect x="4" y="2" width="1" height="5" fill="#3c4da0"/></svg>
<svg style="left:22px;top:500px;" width="16" height="16" viewBox="0 0 16 16" ><path d="M10.4 0.2 L15.8 2.8 V13.2 L10.4 15.8 L6.8 12.6 L3 15 L0.3 12.6 V3.4 L3 1 L6.8 3.4 Z" fill="#ece8f6"/><path d="M10.4 0.9 L13 2.3 V5.3 L3.2 12.3 L0.9 10.5 V8.7 Z" fill="#5c52b0"/><path d="M10.4 14.8 L13 13.4 V10.4 L3.2 3.4 L0.9 5.2 V7 Z" fill="#9486f6"/><path d="M0.9 5.2 L2.7 4 V11.8 L0.9 10.5 Z" fill="#7a5cf0"/><path d="M12.4 1.9 L15.2 3.2 V12.8 L12.4 14.1 Z" fill="#c496ff"/><path d="M12.4 5.4 L9.3 7.85 L12.4 10.3 Z" fill="#f4f0fc"/><path d="M2.7 6.5 L4.3 7.85 L2.7 9.2 Z" fill="#dcdcdc"/></svg>
<span class="t" style="left:43px;top:500px;">Scripts</span>
<div style="left:17px;top:524px;width:5px;height:1px;background:repeating-linear-gradient(to right,#808080 0,#808080 1px,transparent 1px,transparent 2px);"></div>
<svg style="left:7px;top:520px;" width="9" height="9" viewBox="0 0 9 9" ><rect x="0.5" y="0.5" width="8" height="8" rx="1.5" fill="#fcfcfc" stroke="#919191"/><rect x="2" y="4" width="5" height="1" fill="#3c4da0"/><rect x="4" y="2" width="1" height="5" fill="#3c4da0"/></svg>
<svg style="left:22px;top:516px;" width="16" height="16" viewBox="0 0 16 16" ><rect x="1.4" y="0.3" width="14" height="15.4" fill="#f4f4f4"/><rect x="2.6" y="1.6" width="11.8" height="12.8" fill="#f4f4f4" stroke="#111" stroke-width="1.2"/><rect x="2" y="1" width="13" height="3.4" fill="#111"/><path d="M6.8 2 V14" stroke="#111" stroke-width="1.2"/><rect x="6.2" y="1" width="1.2" height="2" fill="#f4f4f4"/><rect x="10.2" y="1" width="1.2" height="2" fill="#f4f4f4"/><path d="M10 6 h6 v10 h-6 z" fill="#f4f4f4"/><path d="M10.7 7 L16 11.3 L10.7 15.6 Z" fill="#12b850"/></svg>
<span class="t" style="left:43px;top:516px;">Soft PLCs</span>
<div style="left:17px;top:540px;width:5px;height:1px;background:repeating-linear-gradient(to right,#808080 0,#808080 1px,transparent 1px,transparent 2px);"></div>
<svg style="left:7px;top:536px;" width="9" height="9" viewBox="0 0 9 9" ><rect x="0.5" y="0.5" width="8" height="8" rx="1.5" fill="#fcfcfc" stroke="#919191"/><rect x="2" y="4" width="5" height="1" fill="#3c4da0"/><rect x="4" y="2" width="1" height="5" fill="#3c4da0"/></svg>
<svg style="left:22px;top:532px;" width="16" height="16" viewBox="0 0 16 16" ><rect x="0.3" y="0.3" width="15.4" height="15" fill="#f4f4f4"/><rect x="1.6" y="1.5" width="12.8" height="12.5" fill="#f4f4f4" stroke="#111" stroke-width="1.1"/><rect x="4.3" y="3" width="1.4" height="4.6" fill="#111"/><rect x="7.6" y="3" width="1.6" height="2.4" fill="#111"/><rect x="11" y="3" width="1.4" height="3.4" fill="#111"/><rect x="4.3" y="10.8" width="1.4" height="2.4" fill="#111"/><rect x="7.6" y="11.8" width="1.6" height="1.4" fill="#111"/><rect x="11" y="9.6" width="1.4" height="3.6" fill="#111"/><path d="M2.6 12.6 L6 9.5 L8.4 11 L13.6 6.2" fill="none" stroke="#1a9af0" stroke-width="1.6"/></svg>
<span class="t" style="left:43px;top:532px;">Reports</span>
<div style="left:17px;top:556px;width:5px;height:1px;background:repeating-linear-gradient(to right,#808080 0,#808080 1px,transparent 1px,transparent 2px);"></div>
<svg style="left:7px;top:552px;" width="9" height="9" viewBox="0 0 9 9" ><rect x="0.5" y="0.5" width="8" height="8" rx="1.5" fill="#fcfcfc" stroke="#919191"/><rect x="2" y="4" width="5" height="1" fill="#3c4da0"/><rect x="4" y="2" width="1" height="5" fill="#3c4da0"/></svg>
<svg style="left:22px;top:548px;" width="16" height="16" viewBox="0 0 16 16" ><path d="M0.6 2.6 h5 v-2.2 h7.6 l2.6 2.6 v9 h-2 v3.4 h-9 v-3.4 h-4.2 z" fill="#f4f4f4"/><path d="M7 1.6 H12.4 L14.6 3.8 V11 H13" fill="none" stroke="#222" stroke-width="1.1"/><path d="M12 1.6 V4.2 H14.6" fill="none" stroke="#222" stroke-width="0.9"/><path d="M5.4 3.8 H1.8 V11 H5.4" fill="none" stroke="#222" stroke-width="1.1"/><path d="M5.8 6.9 H10.6 L12.9 9.2 V14.4 H5.8 Z" fill="#f0f0f0" stroke="#222" stroke-width="1.1"/><path d="M10.3 6.9 V9.5 H12.9" fill="none" stroke="#222" stroke-width="0.9"/></svg>
<span class="t" style="left:43px;top:548px;">Recipes</span>
<div style="left:127px;top:53px;width:22px;height:20px;background:#dcdcdc;border:1px solid #444;"></div>
<span class="tb" style="left:134px;top:56px;font-size:12px;line-height:18px;color:#333;">&lt;</span>
<div style="left:152px;top:52px;width:1067px;height:686px;background:#ababab;border-top:1px solid #a0a0a0;border-left:1px solid #a0a0a0;"></div>
<div style="left:153px;top:53px;width:1066px;height:685px;background:#ababab;border-top:1px solid #696969;border-left:1px solid #696969;"></div>
<div style="left:154px;top:54px;width:1064px;height:683px;background:#c0c0c0;"></div>
<div style="left:157px;top:81px;width:1058px;height:653px;background:#ababab;"></div>
<svg style="left:161px;top:61px;" width="16" height="16" viewBox="0 0 16 16" ><g fill="none" stroke="#f4f4f4" stroke-width="3"><path d="M3.15 7.7 A5.7 5.7 0 1 1 8.3 12.7"/><path d="M8.4 3.2 V7.5 H11.8"/><path d="M0.3 5.4 L3.4 8.4 L6.6 5.4"/><path d="M1.1 10.4 H7 M1.1 12.4 H7 M1.1 14.5 H7"/></g><circle cx="8.8" cy="6.8" r="5.5" fill="#f4f4f4"/><g fill="none" stroke="#333" stroke-width="1.25"><path d="M3.15 7.7 A5.7 5.7 0 1 1 8.3 12.7"/><path d="M8.4 3.2 V7.5 H11.8"/><path d="M0.3 5.4 L3.4 8.4 L6.6 5.4"/><path d="M1.1 10.4 H7 M1.1 12.4 H7 M1.1 14.5 H7"/></g></svg>
<span class="ttl" style="left:185px;top:54px;color:#696969;">[0] Trigger</span>
<div style="left:1132px;top:71px;width:13px;height:2px;background:#696969;"></div>
<svg style="left:1163px;top:62px;" width="13" height="15" viewBox="0 0 13 15" shape-rendering="crispEdges"><rect x="3.5" y="0.5" width="8" height="9" fill="none" stroke="#696969"/><rect x="3" y="0" width="9" height="3" fill="#696969"/><rect x="0.5" y="6.5" width="8" height="8" fill="#c0c0c0" stroke="#696969"/><rect x="0" y="6" width="9" height="3" fill="#696969"/></svg>
<span class="x" style="left:1193px;top:59px;color:#696969;">X</span>
<div style="left:157px;top:81px;width:1058px;height:21px;background:#fff;"></div>
<div style="left:157px;top:102px;width:1058px;height:1px;background:#a0a0a0;"></div>
<div style="left:157px;top:103px;width:22px;height:87px;background:#fff;"></div>
<div style="left:179px;top:81px;width:1px;height:110px;background:#a0a0a0;"></div>
<div style="left:157px;top:124px;width:22px;height:1px;background:#e4e4e4;"></div>
<div style="left:180px;top:103px;width:1035px;height:21px;background:#dcdcdc;"></div>
<div style="left:180px;top:124px;width:1035px;height:1px;background:#a0a0a0;"></div>
<div style="left:157px;top:146px;width:22px;height:1px;background:#e4e4e4;"></div>
<div style="left:180px;top:125px;width:1035px;height:21px;background:#dcdcdc;"></div>
<div style="left:180px;top:146px;width:1035px;height:1px;background:#a0a0a0;"></div>
<div style="left:157px;top:168px;width:22px;height:1px;background:#e4e4e4;"></div>
<div style="left:180px;top:147px;width:1035px;height:21px;background:#dcdcdc;"></div>
<div style="left:180px;top:168px;width:1035px;height:1px;background:#a0a0a0;"></div>
<div style="left:157px;top:190px;width:22px;height:1px;background:#fff;"></div>
<div style="left:180px;top:169px;width:1035px;height:21px;background:#dcdcdc;"></div>
<div style="left:180px;top:190px;width:1035px;height:1px;background:#a0a0a0;"></div>
<div style="left:225px;top:82px;width:1px;height:20px;background:#e4e4e4;"></div>
<div style="left:225px;top:103px;width:1px;height:88px;background:#a0a0a0;"></div>
<span class="g" style="left:187px;top:81px;">No</span>
<span class="g" style="left:183px;top:103px;">0</span>
<span class="g" style="left:183px;top:125px;">1</span>
<span class="g" style="left:183px;top:147px;">2</span>
<span class="g" style="left:183px;top:169px;">New</span>
<div style="left:290px;top:82px;width:1px;height:20px;background:#e4e4e4;"></div>
<div style="left:290px;top:103px;width:1px;height:88px;background:#a0a0a0;"></div>
<span class="g" style="left:233px;top:81px;">Enable</span>
<span class="g" style="left:229px;top:103px;">Defined</span>
<span class="g" style="left:229px;top:125px;">Defined</span>
<span class="g" style="left:229px;top:147px;">Defined</span>
<div style="left:347px;top:82px;width:1px;height:20px;background:#e4e4e4;"></div>
<div style="left:347px;top:103px;width:1px;height:88px;background:#a0a0a0;"></div>
<span class="g" style="left:298px;top:81px;transform:scaleX(0.958);">Tag</span>
<span class="g" style="left:294px;top:103px;transform:scaleX(0.922);">_Tag_2_1</span>
<span class="g" style="left:294px;top:125px;transform:scaleX(0.922);">_Tag_2_1</span>
<span class="g" style="left:294px;top:147px;transform:scaleX(0.922);">_Tag_2_1</span>
<div style="left:412px;top:82px;width:1px;height:20px;background:#e4e4e4;"></div>
<div style="left:412px;top:103px;width:1px;height:88px;background:#a0a0a0;"></div>
<span class="g" style="left:355px;top:81px;">Bitwise</span>
<svg style="left:373px;top:107px;" width="13" height="13" viewBox="0 0 13 13" ><rect x="0" y="0" width="13" height="13" rx="3" fill="#005fb8"/><path d="M3.2 6.8 L5.6 9.2 L10 4.4" fill="none" stroke="#fff" stroke-width="0.9"/></svg>
<svg style="left:373px;top:129px;" width="13" height="13" viewBox="0 0 13 13" ><rect x="0" y="0" width="13" height="13" rx="3" fill="#005fb8"/><path d="M3.2 6.8 L5.6 9.2 L10 4.4" fill="none" stroke="#fff" stroke-width="0.9"/></svg>
<svg style="left:373px;top:151px;" width="13" height="13" viewBox="0 0 13 13" ><rect x="0.5" y="0.5" width="12" height="12" rx="3" fill="#f6f6f6" stroke="#7a7a7a"/></svg>
<div style="left:456px;top:82px;width:1px;height:20px;background:#e4e4e4;"></div>
<div style="left:456px;top:103px;width:1px;height:88px;background:#a0a0a0;"></div>
<span class="g" style="left:420px;top:81px;">Bit</span>
<span class="g" style="left:416px;top:103px;">0</span>
<span class="g" style="left:416px;top:125px;">0</span>
<span class="g" style="left:416px;top:147px;color:#808080;">0</span>
<div style="left:539px;top:82px;width:1px;height:20px;background:#e4e4e4;"></div>
<div style="left:539px;top:103px;width:1px;height:88px;background:#a0a0a0;"></div>
<span class="g" style="left:464px;top:81px;">Expression</span>
<span class="g" style="left:460px;top:103px;">=</span>
<span class="g" style="left:460px;top:125px;">=</span>
<span class="g" style="left:460px;top:147px;">=</span>
<div style="left:596px;top:82px;width:1px;height:20px;background:#e4e4e4;"></div>
<div style="left:596px;top:103px;width:1px;height:88px;background:#a0a0a0;"></div>
<span class="g" style="left:547px;top:81px;">Set</span>
<span class="g" style="left:543px;top:103px;transform:scaleX(0.922);">_Tag_10</span>
<span class="g" style="left:543px;top:125px;transform:scaleX(0.922);">_Tag_10</span>
<span class="g" style="left:543px;top:147px;transform:scaleX(0.922);">_Tag_2_2</span>
<div style="left:716px;top:82px;width:1px;height:20px;background:#e4e4e4;"></div>
<div style="left:716px;top:103px;width:1px;height:88px;background:#a0a0a0;"></div>
<span class="g" style="left:604px;top:81px;">Time Based</span>
<span class="g" style="left:600px;top:103px;">XX.XX.XXXX XX:XX:1X</span>
<div style="left:597px;top:169px;width:119px;height:21px;background:#3399ff;"></div>
<div style="left:789px;top:82px;width:1px;height:20px;background:#e4e4e4;"></div>
<div style="left:789px;top:103px;width:1px;height:88px;background:#a0a0a0;"></div>
<span class="g" style="left:724px;top:81px;">Function</span>
<span class="g" style="left:720px;top:103px;">Defined</span>
<span class="g" style="left:720px;top:125px;">Defined</span>
<span class="g" style="left:720px;top:147px;">Defined</span>
<div style="left:1214px;top:82px;width:1px;height:20px;background:#e4e4e4;"></div>
<div style="left:1214px;top:103px;width:1px;height:88px;background:#a0a0a0;"></div>
<span class="g" style="left:797px;top:81px;">Comment</span>
<svg style="left:162px;top:175px;" width="7" height="11" viewBox="0 0 7 11" ><path d="M0 0.2 L5.6 5.2 L0 10.2 Z" fill="#3c3c3c"/></svg>
<div style="left:159px;top:195px;width:1053px;height:450px;background:#696969;"></div>
<div style="left:162px;top:222px;width:1047px;height:420px;background:#ababab;"></div>
<svg style="left:166px;top:202px;" width="16" height="16" viewBox="0 0 16 16" ><g fill="none" stroke="#fff" stroke-width="1.5"><path d="M3.15 7.7 A5.7 5.7 0 1 1 8.3 12.7"/><path d="M8.4 3.2 V7.5 H11.8"/><path d="M0.3 5.4 L3.4 8.4 L6.6 5.4"/><path d="M1.1 10.4 H7 M1.1 12.4 H7 M1.1 14.5 H7"/></g></svg>
<span class="ttl" style="left:190px;top:195px;color:#fff;">Triggers</span>
<div style="left:1126px;top:212px;width:13px;height:2px;background:#fff;"></div>
<div style="left:1156px;top:203px;width:12px;height:12px;border:2px solid #fff;border-top:4px solid #fff;"></div>
<span class="x" style="left:1187px;top:200px;color:#fff;">X</span>
<div style="left:162px;top:222px;width:1047px;height:21px;background:#fff;"></div>
<div style="left:162px;top:243px;width:1047px;height:1px;background:#a0a0a0;"></div>
<div style="left:162px;top:244px;width:22px;height:109px;background:#fff;"></div>
<div style="left:184px;top:222px;width:1px;height:132px;background:#a0a0a0;"></div>
<div style="left:162px;top:265px;width:22px;height:1px;background:#e4e4e4;"></div>
<div style="left:185px;top:244px;width:1024px;height:21px;background:#dcdcdc;"></div>
<div style="left:185px;top:265px;width:1024px;height:1px;background:#a0a0a0;"></div>
<div style="left:162px;top:287px;width:22px;height:1px;background:#e4e4e4;"></div>
<div style="left:185px;top:266px;width:1024px;height:21px;background:#dcdcdc;"></div>
<div style="left:185px;top:287px;width:1024px;height:1px;background:#a0a0a0;"></div>
<div style="left:162px;top:309px;width:22px;height:1px;background:#e4e4e4;"></div>
<div style="left:185px;top:288px;width:1024px;height:21px;background:#dcdcdc;"></div>
<div style="left:185px;top:309px;width:1024px;height:1px;background:#a0a0a0;"></div>
<div style="left:162px;top:331px;width:22px;height:1px;background:#e4e4e4;"></div>
<div style="left:185px;top:310px;width:1024px;height:21px;background:#dcdcdc;"></div>
<div style="left:185px;top:331px;width:1024px;height:1px;background:#a0a0a0;"></div>
<div style="left:162px;top:353px;width:22px;height:1px;background:#fff;"></div>
<div style="left:185px;top:332px;width:1024px;height:21px;background:#dcdcdc;"></div>
<div style="left:185px;top:353px;width:1024px;height:1px;background:#a0a0a0;"></div>
<div style="left:235px;top:223px;width:1px;height:20px;background:#e4e4e4;"></div>
<div style="left:235px;top:244px;width:1px;height:110px;background:#a0a0a0;"></div>
<span class="g" style="left:192px;top:222px;">Address</span>
<span class="g" style="left:188px;top:244px;">0</span>
<span class="g" style="left:188px;top:266px;">1</span>
<span class="g" style="left:188px;top:288px;">2</span>
<span class="g" style="left:188px;top:310px;">3</span>
<div style="left:291px;top:223px;width:1px;height:20px;background:#e4e4e4;"></div>
<div style="left:291px;top:244px;width:1px;height:110px;background:#a0a0a0;"></div>
<span class="g" style="left:243px;top:222px;">Symbol</span>
<span class="g" style="left:239px;top:244px;">Trigger</span>
<span class="g" style="left:239px;top:266px;">Trigger (1)</span>
<span class="g" style="left:239px;top:288px;">Trigger (2)</span>
<span class="g" style="left:239px;top:310px;">Trigger (3)</span>
<div style="left:337px;top:223px;width:1px;height:20px;background:#e4e4e4;"></div>
<div style="left:337px;top:244px;width:1px;height:110px;background:#a0a0a0;"></div>
<span class="g" style="left:299px;top:222px;">Enable</span>
<span class="g" style="left:295px;top:244px;">Defined</span>
<div style="left:292px;top:266px;width:45px;height:21px;background:#3399ff;"></div>
<span class="g w" style="left:295px;top:266px;">Defined</span>
<span class="g" style="left:295px;top:288px;">Defined</span>
<span class="g" style="left:295px;top:310px;">Defined</span>
<div style="left:375px;top:223px;width:1px;height:20px;background:#e4e4e4;"></div>
<div style="left:375px;top:244px;width:1px;height:110px;background:#a0a0a0;"></div>
<span class="g" style="left:345px;top:222px;">Lines</span>
<span class="g" style="left:341px;top:244px;">3</span>
<span class="g" style="left:341px;top:266px;">3</span>
<span class="g" style="left:341px;top:288px;">3</span>
<span class="g" style="left:341px;top:310px;">3</span>
<span class="g" style="left:341px;top:332px;">12</span>
<div style="left:1208px;top:223px;width:1px;height:20px;background:#e4e4e4;"></div>
<div style="left:1208px;top:244px;width:1px;height:110px;background:#a0a0a0;"></div>
<span class="g" style="left:383px;top:222px;">Comment</span>
<svg style="left:167px;top:272px;" width="7" height="11" viewBox="0 0 7 11" ><path d="M0 0.2 L5.6 5.2 L0 10.2 Z" fill="#3c3c3c"/></svg>
<div style="left:384px;top:279px;width:600px;height:400px;background:#696969;"></div>
<div style="left:387px;top:306px;width:594px;height:335px;background:#ababab;"></div>
<div style="left:387px;top:641px;width:594px;height:35px;background:#dcdcdc;"></div>
<svg style="left:392px;top:286px;" width="16" height="16" viewBox="0 0 16 16" ><path d="M0.7 7.3 L5 11.6 L13.2 2.8" fill="none" stroke="#fff" stroke-width="4.2" stroke-linejoin="miter"/><path d="M0.7 7.3 L5 11.6 L13.2 2.8" fill="none" stroke="#2e8b2e" stroke-width="2.3"/></svg>
<span class="ttl" style="left:415px;top:279px;color:#fff;">Conditions Dialog</span>
<div style="left:928px;top:287px;width:12px;height:12px;border:2px solid #fff;border-top:4px solid #fff;"></div>
<span class="x" style="left:959px;top:284px;color:#fff;">X</span>
<div style="left:387px;top:306px;width:594px;height:21px;background:#fff;"></div>
<div style="left:387px;top:327px;width:594px;height:1px;background:#a0a0a0;"></div>
<div style="left:387px;top:328px;width:22px;height:87px;background:#fff;"></div>
<div style="left:409px;top:306px;width:1px;height:110px;background:#a0a0a0;"></div>
<div style="left:387px;top:349px;width:22px;height:1px;background:#e4e4e4;"></div>
<div style="left:410px;top:328px;width:571px;height:21px;background:#dcdcdc;"></div>
<div style="left:410px;top:349px;width:571px;height:1px;background:#a0a0a0;"></div>
<div style="left:387px;top:371px;width:22px;height:1px;background:#e4e4e4;"></div>
<div style="left:410px;top:350px;width:571px;height:21px;background:#dcdcdc;"></div>
<div style="left:410px;top:371px;width:571px;height:1px;background:#a0a0a0;"></div>
<div style="left:387px;top:393px;width:22px;height:1px;background:#e4e4e4;"></div>
<div style="left:410px;top:372px;width:571px;height:21px;background:#dcdcdc;"></div>
<div style="left:410px;top:393px;width:571px;height:1px;background:#a0a0a0;"></div>
<div style="left:387px;top:415px;width:22px;height:1px;background:#fff;"></div>
<div style="left:410px;top:394px;width:571px;height:21px;background:#dcdcdc;"></div>
<div style="left:410px;top:415px;width:571px;height:1px;background:#a0a0a0;"></div>
<div style="left:515px;top:307px;width:1px;height:20px;background:#e4e4e4;"></div>
<div style="left:515px;top:328px;width:1px;height:88px;background:#a0a0a0;"></div>
<span class="g" style="left:417px;top:306px;">Conditions</span>
<span class="g" style="left:413px;top:328px;transform:scaleX(0.922);">_Tag_1 = _Tag_5</span>
<span class="g" style="left:413px;top:350px;transform:scaleX(0.922);">_Tag_3 = _Tag_2_1</span>
<div style="left:410px;top:372px;width:105px;height:21px;background:#3399ff;"></div>
<span class="g w" style="left:413px;top:372px;transform:scaleX(0.922);">_Tag = "true"</span>
<span class="g" style="left:413px;top:394px;">New</span>
<div style="left:980px;top:307px;width:1px;height:20px;background:#e4e4e4;"></div>
<div style="left:980px;top:328px;width:1px;height:88px;background:#a0a0a0;"></div>
<span class="g" style="left:523px;top:306px;">Comment</span>
<svg style="left:392px;top:378px;" width="7" height="11" viewBox="0 0 7 11" ><path d="M0 0.2 L5.6 5.2 L0 10.2 Z" fill="#3c3c3c"/></svg>
<div style="left:739px;top:648px;width:73px;height:21px;background:#fdfdfd;border:1px solid #d2d2d2;border-bottom-color:#bdbdbd;border-radius:4px;text-align:center;"><span class="tb" style="position:static;display:inline-block;line-height:19px;transform:scaleX(0.94);">OK</span></div>
<div style="left:820px;top:648px;width:73px;height:21px;background:#fdfdfd;border:1px solid #d2d2d2;border-bottom-color:#bdbdbd;border-radius:4px;text-align:center;"><span class="tb" style="position:static;display:inline-block;line-height:19px;transform:scaleX(0.94);">Clear</span></div>
<div style="left:901px;top:648px;width:73px;height:21px;background:#fdfdfd;border:1px solid #d2d2d2;border-bottom-color:#bdbdbd;border-radius:4px;text-align:center;"><span class="tb" style="position:static;display:inline-block;line-height:19px;transform:scaleX(0.94);">Cancel</span></div>
<div style="left:153px;top:737px;width:1066px;height:1px;background:#a8a8a8;"></div>
<div style="left:152px;top:738px;width:1067px;height:2px;background:#fff;"></div>
<div style="left:3px;top:740px;width:1216px;height:26px;background:#f0f0f0;"></div>
<div style="left:1218px;top:1px;width:1px;height:737px;background:#c0c0c0;"></div>
<div style="left:1218px;top:738px;width:1px;height:28px;background:#b4b4b4;"></div>
<div style="left:3px;top:740px;width:91px;height:26px;background:#f0f0f0;border-top:1px solid #fff;border-left:1px solid #fff;border-right:1px solid #696969;border-bottom:1px solid #696969;"></div>
<div style="left:4px;top:741px;width:89px;height:24px;border-top:1px solid #e3e3e3;border-left:1px solid #e3e3e3;border-right:1px solid #a0a0a0;border-bottom:1px solid #a0a0a0;"></div>
<svg style="left:11px;top:746px;" width="16" height="16" viewBox="0 0 16 16" ><path d="M6.58 0.84 L9.42 0.84 L9.40 2.37 L10.99 3.03 L12.06 1.93 L14.07 3.94 L12.97 5.01 L13.63 6.60 L15.16 6.58 L15.16 9.42 L13.63 9.40 L12.97 10.99 L14.07 12.06 L12.06 14.07 L10.99 12.97 L9.40 13.63 L9.42 15.16 L6.58 15.16 L6.60 13.63 L5.01 12.97 L3.94 14.07 L1.93 12.06 L3.03 10.99 L2.37 9.40 L0.84 9.42 L0.84 6.58 L2.37 6.60 L3.03 5.01 L1.93 3.94 L3.94 1.93 L5.01 3.03 L6.60 2.37 Z" fill="#000"/><circle cx="8" cy="8" r="2.8" fill="#f4f4f4"/><circle cx="8" cy="8" r="1.35" fill="#000"/><path d="M9.3 8.3 L16 8.3 L16 16 L9.3 16 Z" fill="#f0f0f0"/><path d="M10.1 8.8 L15.4 12 L10.1 15.2 Z" fill="#12a038"/></svg>
<span class="t" style="left:36px;top:746px;">[0] Trigger</span>
<div style="left:97px;top:740px;width:109px;height:26px;background:#f0f0f0;border-top:1px solid #fff;border-left:1px solid #fff;border-right:1px solid #696969;border-bottom:1px solid #696969;"></div>
<div style="left:98px;top:741px;width:107px;height:24px;border-top:1px solid #e3e3e3;border-left:1px solid #e3e3e3;border-right:1px solid #a0a0a0;border-bottom:1px solid #a0a0a0;"></div>
<svg style="left:108px;top:746px;" width="16" height="16" viewBox="0 0 16 16" ><path d="M6.58 0.84 L9.42 0.84 L9.40 2.37 L10.99 3.03 L12.06 1.93 L14.07 3.94 L12.97 5.01 L13.63 6.60 L15.16 6.58 L15.16 9.42 L13.63 9.40 L12.97 10.99 L14.07 12.06 L12.06 14.07 L10.99 12.97 L9.40 13.63 L9.42 15.16 L6.58 15.16 L6.60 13.63 L5.01 12.97 L3.94 14.07 L1.93 12.06 L3.03 10.99 L2.37 9.40 L0.84 9.42 L0.84 6.58 L2.37 6.60 L3.03 5.01 L1.93 3.94 L3.94 1.93 L5.01 3.03 L6.60 2.37 Z" fill="#000"/><circle cx="8" cy="8" r="2.8" fill="#f4f4f4"/><circle cx="8" cy="8" r="1.35" fill="#000"/><path d="M9.3 8.3 L16 8.3 L16 16 L9.3 16 Z" fill="#f0f0f0"/><path d="M10.1 8.8 L15.4 12 L10.1 15.2 Z" fill="#12a038"/></svg>
<span class="t" style="left:133px;top:746px;">[1] Trigger (1)</span>
<div style="left:209px;top:740px;width:109px;height:26px;background:#f0f0f0;border-top:1px solid #fff;border-left:1px solid #fff;border-right:1px solid #696969;border-bottom:1px solid #696969;"></div>
<div style="left:210px;top:741px;width:107px;height:24px;border-top:1px solid #e3e3e3;border-left:1px solid #e3e3e3;border-right:1px solid #a0a0a0;border-bottom:1px solid #a0a0a0;"></div>
<svg style="left:220px;top:746px;" width="16" height="16" viewBox="0 0 16 16" ><path d="M6.58 0.84 L9.42 0.84 L9.40 2.37 L10.99 3.03 L12.06 1.93 L14.07 3.94 L12.97 5.01 L13.63 6.60 L15.16 6.58 L15.16 9.42 L13.63 9.40 L12.97 10.99 L14.07 12.06 L12.06 14.07 L10.99 12.97 L9.40 13.63 L9.42 15.16 L6.58 15.16 L6.60 13.63 L5.01 12.97 L3.94 14.07 L1.93 12.06 L3.03 10.99 L2.37 9.40 L0.84 9.42 L0.84 6.58 L2.37 6.60 L3.03 5.01 L1.93 3.94 L3.94 1.93 L5.01 3.03 L6.60 2.37 Z" fill="#000"/><circle cx="8" cy="8" r="2.8" fill="#f4f4f4"/><circle cx="8" cy="8" r="1.35" fill="#000"/><path d="M9.3 8.3 L16 8.3 L16 16 L9.3 16 Z" fill="#f0f0f0"/><path d="M10.1 8.8 L15.4 12 L10.1 15.2 Z" fill="#12a038"/></svg>
<span class="t" style="left:245px;top:746px;">[2] Trigger (2)</span>
<div style="left:321px;top:740px;width:109px;height:26px;background:#f0f0f0;border-top:1px solid #fff;border-left:1px solid #fff;border-right:1px solid #696969;border-bottom:1px solid #696969;"></div>
<div style="left:322px;top:741px;width:107px;height:24px;border-top:1px solid #e3e3e3;border-left:1px solid #e3e3e3;border-right:1px solid #a0a0a0;border-bottom:1px solid #a0a0a0;"></div>
<svg style="left:332px;top:746px;" width="16" height="16" viewBox="0 0 16 16" ><path d="M6.58 0.84 L9.42 0.84 L9.40 2.37 L10.99 3.03 L12.06 1.93 L14.07 3.94 L12.97 5.01 L13.63 6.60 L15.16 6.58 L15.16 9.42 L13.63 9.40 L12.97 10.99 L14.07 12.06 L12.06 14.07 L10.99 12.97 L9.40 13.63 L9.42 15.16 L6.58 15.16 L6.60 13.63 L5.01 12.97 L3.94 14.07 L1.93 12.06 L3.03 10.99 L2.37 9.40 L0.84 9.42 L0.84 6.58 L2.37 6.60 L3.03 5.01 L1.93 3.94 L3.94 1.93 L5.01 3.03 L6.60 2.37 Z" fill="#000"/><circle cx="8" cy="8" r="2.8" fill="#f4f4f4"/><circle cx="8" cy="8" r="1.35" fill="#000"/><path d="M9.3 8.3 L16 8.3 L16 16 L9.3 16 Z" fill="#f0f0f0"/><path d="M10.1 8.8 L15.4 12 L10.1 15.2 Z" fill="#12a038"/></svg>
<span class="t" style="left:357px;top:746px;">[3] Trigger (3)</span>
<div style="left:433px;top:740px;width:83px;height:26px;background:#f8f8f8;border-top:1px solid #696969;border-left:1px solid #696969;border-right:1px solid #fff;border-bottom:1px solid #fff;"></div>
<div style="left:434px;top:741px;width:81px;height:24px;border-top:1px solid #a0a0a0;border-left:1px solid #a0a0a0;"></div>
<svg style="left:445px;top:747px;" width="16" height="16" viewBox="0 0 16 16" ><path d="M6.58 0.84 L9.42 0.84 L9.40 2.37 L10.99 3.03 L12.06 1.93 L14.07 3.94 L12.97 5.01 L13.63 6.60 L15.16 6.58 L15.16 9.42 L13.63 9.40 L12.97 10.99 L14.07 12.06 L12.06 14.07 L10.99 12.97 L9.40 13.63 L9.42 15.16 L6.58 15.16 L6.60 13.63 L5.01 12.97 L3.94 14.07 L1.93 12.06 L3.03 10.99 L2.37 9.40 L0.84 9.42 L0.84 6.58 L2.37 6.60 L3.03 5.01 L1.93 3.94 L3.94 1.93 L5.01 3.03 L6.60 2.37 Z" fill="#000"/><circle cx="8" cy="8" r="2.8" fill="#f4f4f4"/><circle cx="8" cy="8" r="1.35" fill="#000"/><path d="M9.3 8.3 L16 8.3 L16 16 L9.3 16 Z" fill="#f8f8f8"/><path d="M10.1 8.8 L15.4 12 L10.1 15.2 Z" fill="#12a038"/></svg>
<span class="t" style="left:470px;top:747px;">Triggers</span>
</body></html>
